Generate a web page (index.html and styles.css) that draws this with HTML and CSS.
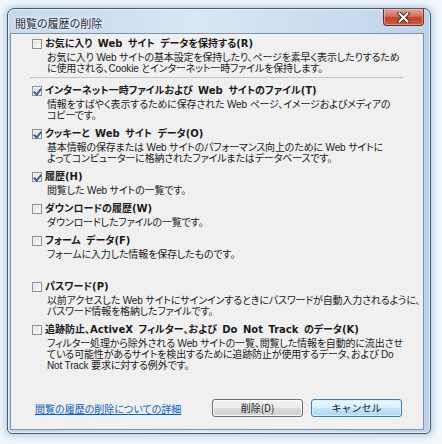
FILE: index.html
```html
<!DOCTYPE html>
<html lang="ja">
<head>
  <meta charset="UTF-8" />
  <title>閲覧の履歴の削除</title>
  <link rel="stylesheet" href="styles.css">
</head>
<body>
  <div class="window">
    <div class="titlebar">
      <span class="title">閲覧の履歴の削除</span>
      <button class="close">
        <svg width="13" height="11" viewBox="0 0 13 11">
          <path d="M2.5 1.5 L10.5 9.5 M10.5 1.5 L2.5 9.5" stroke="#3b2a28" stroke-width="4" stroke-linecap="square" fill="none"/>
          <path d="M2.5 1.5 L10.5 9.5 M10.5 1.5 L2.5 9.5" stroke="#fff" stroke-width="2" stroke-linecap="square" fill="none"/>
        </svg>
      </button>
    </div>

    <div class="client">
      <div class="options">
        <div class="option">
          <div class="option-head"><span class="check"></span><span class="label">お気に入り Web サイト データを保持する(R)</span></div>
          <div class="desc">お気に入り Web サイトの基本設定を保持したり、ページを素早く表示したりするため<br>に使用される、Cookie とインターネット一時ファイルを保持します。</div>
        </div>
        <div class="separator"></div>
        <div class="option">
          <div class="option-head"><span class="check checked"></span><span class="label">インターネット一時ファイルおよび Web サイトのファイル(T)</span></div>
          <div class="desc">情報をすばやく表示するために保存された Web ページ、イメージおよびメディアの<br>コピーです。</div>
        </div>
        <div class="option">
          <div class="option-head"><span class="check checked"></span><span class="label">クッキーと Web サイト データ(O)</span></div>
          <div class="desc">基本情報の保存または Web サイトのパフォーマンス向上のために Web サイトに<br>よってコンピューターに格納されたファイルまたはデータベースです。</div>
        </div>
        <div class="option">
          <div class="option-head"><span class="check checked"></span><span class="label">履歴(H)</span></div>
          <div class="desc">閲覧した Web サイトの一覧です。</div>
        </div>
        <div class="option">
          <div class="option-head"><span class="check"></span><span class="label">ダウンロードの履歴(W)</span></div>
          <div class="desc">ダウンロードしたファイルの一覧です。</div>
        </div>
        <div class="option">
          <div class="option-head"><span class="check"></span><span class="label">フォーム データ(F)</span></div>
          <div class="desc">フォームに入力した情報を保存したものです。</div>
        </div>
        <div class="option spaced">
          <div class="option-head"><span class="check"></span><span class="label">パスワード(P)</span></div>
          <div class="desc">以前アクセスした Web サイトにサインインするときにパスワードが自動入力されるように、<br>パスワード情報を格納したファイルです。</div>
        </div>
        <div class="option">
          <div class="option-head"><span class="check"></span><span class="label">追跡防止、ActiveX フィルター、および Do Not Track のデータ(K)</span></div>
          <div class="desc">フィルター処理から除外される Web サイトの一覧、閲覧した情報を自動的に流出させ<br>ている可能性があるサイトを検出するために追跡防止が使用するデータ、および Do<br>Not Track 要求に対する例外です。</div>
        </div>
      </div>

      <div class="footer">
        <a class="help" href="#">閲覧の履歴の削除についての詳細</a>
        <div class="buttons">
          <button class="btn">削除(D)</button>
          <button class="btn btn-default">キャンセル</button>
        </div>
      </div>
    </div>
  </div>
</body>
</html>
```

FILE: styles.css
```css
body {
  margin: 0;
  height: 444px;
  background: #f2f7fb;
  font-family: "Noto Sans CJK JP", sans-serif;
  font-feature-settings: "palt";
  color: #1a1a1a;
  overflow: hidden;
}

.window {
  box-sizing: border-box;
  width: 424px;
  height: 426px;
  margin: 8px 0 0 7px;
  border: 1px solid #465a70;
  border-radius: 7px 7px 5px 5px;
  background: linear-gradient(to right, #c3d7ee, #d9e6f4 45%, #c9dbef 80%, #bcd2ea);
  box-shadow: 0 0 7px 2px rgba(110, 150, 195, 0.45), inset 0 0 0 1px rgba(255, 255, 255, 0.55);
  display: flex;
  flex-direction: column;
}

.titlebar {
  height: 24px;
  display: flex;
  align-items: flex-start;
}

.title {
  padding: 8px 0 0 7px;
  font-size: 11px;
  line-height: 12px;
  color: #1e2a38;
  text-shadow: 0 0 6px #fff, 0 0 3px #fff;
}

.close {
  margin-left: auto;
  margin-right: 6px;
  width: 41px;
  height: 17px;
  padding: 0;
  border: 1px solid #6b2f24;
  border-top: none;
  border-radius: 0 0 4px 4px;
  background: linear-gradient(#e8a493, #d46f57 45%, #c2432a 55%, #cc5a3c);
  box-shadow: inset 0 0 0 1px rgba(255, 220, 210, 0.45);
  display: flex;
  align-items: center;
  justify-content: center;
}

.client {
  flex: 1;
  margin: 0 6px 3px 2px;
  border: 1px solid #7f93a8;
  background: #f0f0f0;
  display: flex;
  flex-direction: column;
}

.options {
  padding: 4px 20px 0 21px;
}

.option {
  margin-top: 7px;
}

.option:first-child {
  margin-top: 0;
}

.option.spaced {
  margin-top: 21px;
}

.option-head {
  height: 12px;
  display: flex;
  align-items: center;
  gap: 3px;
}

.check {
  box-sizing: border-box;
  width: 10px;
  height: 10px;
  border: 1px solid #8e8f8f;
  background: linear-gradient(135deg, #d6d6d6, #f6f6f6 70%, #fff);
  box-shadow: inset 0 0 0 1px #f4f4f4;
  position: relative;
}

.check.checked::after {
  content: "";
  position: absolute;
  left: 2px;
  top: 0px;
  width: 3px;
  height: 6px;
  border-right: 2px solid #3d5a96;
  border-bottom: 2px solid #3d5a96;
  transform: rotate(40deg);
}

.label {
  font-family: "DejaVu Sans", "Noto Sans CJK JP", sans-serif;
  font-size: 10px;
  line-height: 12px;
  font-weight: bold;
  word-spacing: 2px;
  white-space: nowrap;
}

.desc {
  margin: 2px 0 0 15px;
  font-family: "Liberation Sans", "Noto Sans CJK JP", sans-serif;
  font-size: 10px;
  line-height: 11px;
  letter-spacing: -0.15px;
  white-space: nowrap;
}

.separator {
  margin: 3px 0 4px -2px;
  border-top: 1px solid #c4c4c4;
}

.footer {
  margin-top: auto;
  padding: 0 21px 12px 24px;
  display: flex;
  align-items: center;
}

.help {
  font-size: 10px;
  color: #0a5fc2;
  text-decoration: underline;
}

.buttons {
  margin-left: auto;
  display: flex;
  gap: 8px;
}

.btn {
  width: 91px;
  height: 18px;
  padding: 0;
  border: 1px solid #707070;
  border-radius: 3px;
  background: linear-gradient(#f2f2f2, #ebebeb 50%, #dddddd 50%, #cfcfcf);
  box-shadow: inset 0 0 0 1px #fcfcfc;
  font-family: "Noto Sans CJK JP", sans-serif;
  font-size: 10px;
  line-height: 14px;
  color: #1a1a1a;
}

.btn-default {
  border-color: #3c7fb1;
  background: linear-gradient(#eaf6fd, #d9f0fc 50%, #bee6fd 50%, #a7d9f5);
  box-shadow: inset 0 0 0 1px #d6f1fd;
}
```
